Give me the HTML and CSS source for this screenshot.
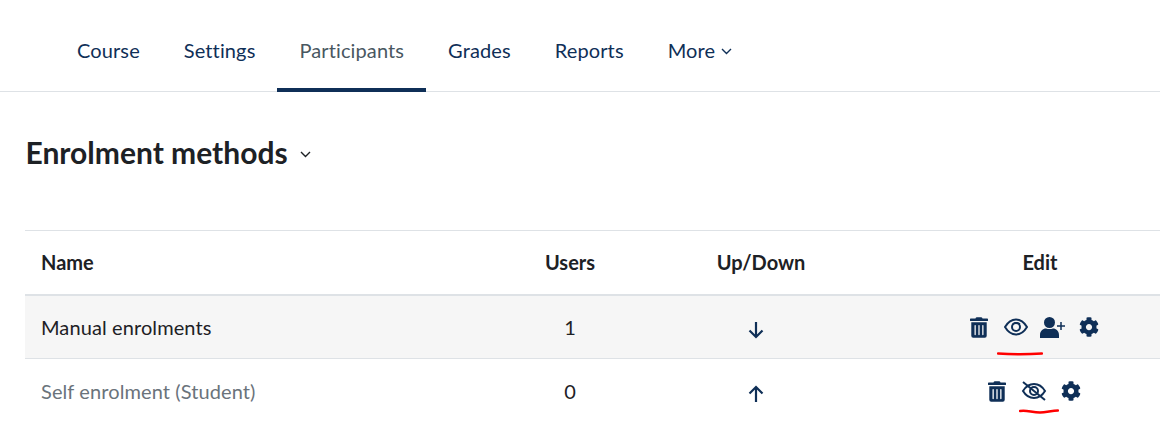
FILE: index.html
```html
<!DOCTYPE html>
<html lang="en">
<head>
  <meta charset="UTF-8">
  <title>Enrolment methods</title>
  <link rel="stylesheet" href="styles.css">
</head>
<body>
  <!-- Course tabs -->
  <nav class="tabs">
    <a class="tab" href="#">Course</a>
    <a class="tab" href="#">Settings</a>
    <a class="tab active" href="#">Participants</a>
    <a class="tab" href="#">Grades</a>
    <a class="tab" href="#">Reports</a>
    <a class="tab" href="#">More
      <svg class="chevron" width="11" height="7" viewBox="0 0 11 7"><path d="M1 1l4.5 4.5L10 1"/></svg>
    </a>
  </nav>

  <div class="heading">
    <h1>Enrolment methods</h1>
    <svg class="chevron" width="11" height="7" viewBox="0 0 11 7"><path d="M1 1l4.5 4.5L10 1"/></svg>
  </div>

  <table class="methods">
    <colgroup>
      <col class="col-name">
      <col class="col-users">
      <col class="col-updown">
      <col class="col-edit">
    </colgroup>
    <thead>
      <tr>
        <th class="name">Name</th>
        <th>Users</th>
        <th>Up/Down</th>
        <th>Edit</th>
      </tr>
    </thead>
    <tbody>
      <tr class="striped">
        <td class="name">Manual enrolments</td>
        <td>1</td>
        <td>
          <svg class="arrow" width="16" height="18" viewBox="0 0 16 18"><path d="M8 1v15M1.500 9.500L8 16l6.500-6.500"/></svg>
        </td>
        <td>
          <div class="actions">
            <svg class="icon" width="18" height="21" viewBox="0 0 448 512"><use href="#trash"/></svg>
            <span class="marked marked-one">
              <svg class="line-icon" width="24" height="18" viewBox="0 0 24 18">
                <path d="M1 9C4 4 8 1.500 12 1.500S20 4 23 9c-3 5-7 7.500-11 7.500S4 14 1 9z"/>
                <circle cx="12" cy="9" r="4"/>
                <path class="glint" d="M8.500 6.500C10 4.500 14 4 16 6"/>
              </svg>
              <svg class="scribble scribble-one" width="46" height="5" viewBox="0 0 46 5"><path d="M1 2.500c14 1 30 1 44 0"/></svg>
            </span>
            <svg class="icon" width="26" height="21" viewBox="0 0 26 21">
              <circle cx="9.500" cy="5.500" r="5.500"/>
              <path d="M0 21v-3c0-4 3-6.500 6-6.500 2 .8 5 .8 7 0 3 0 6 2.500 6 6.500v3z"/>
              <path class="plus" d="M21 5v8M17 9h8"/>
            </svg>
            <svg class="icon" width="20" height="20" viewBox="0 0 512 512"><use href="#cog"/></svg>
          </div>
        </td>
      </tr>
      <tr>
        <td class="name muted">Self enrolment (Student)</td>
        <td>0</td>
        <td>
          <svg class="arrow" width="16" height="18" viewBox="0 0 16 18"><path d="M8 17V2M1.500 8.500L8 2l6.500 6.500"/></svg>
        </td>
        <td>
          <div class="actions">
            <svg class="icon" width="18" height="21" viewBox="0 0 448 512"><use href="#trash"/></svg>
            <span class="marked marked-two">
              <svg class="line-icon" width="26" height="20" viewBox="0 0 26 20">
                <path d="M2 10C5 5 9 3 13 3s8 2 11 7c-3 5-7 7-11 7s-8-2-11-7z"/>
                <circle cx="13" cy="10" r="4"/>
                <path d="M2 1l22 18"/>
              </svg>
              <svg class="scribble scribble-two" width="40" height="6" viewBox="0 0 40 6"><path d="M1 3c6-1.500 12 1.500 20 1.500 6 0 12-2 18-2"/></svg>
            </span>
            <svg class="icon" width="20" height="20" viewBox="0 0 512 512"><use href="#cog"/></svg>
          </div>
        </td>
      </tr>
    </tbody>
  </table>

  <!-- shared icon shapes -->
  <svg class="defs" width="0" height="0">
    <defs>
      <path id="trash" d="M32 464a48 48 0 0 0 48 48h288a48 48 0 0 0 48-48V128H32zm272-256a16 16 0 0 1 32 0v224a16 16 0 0 1-32 0zm-96 0a16 16 0 0 1 32 0v224a16 16 0 0 1-32 0zm-96 0a16 16 0 0 1 32 0v224a16 16 0 0 1-32 0zM432 32H312l-9.400-18.700A24 24 0 0 0 281.100 0H166.800a23.720 23.720 0 0 0-21.400 13.300L136 32H16A16 16 0 0 0 0 48v32a16 16 0 0 0 16 16h416a16 16 0 0 0 16-16V48a16 16 0 0 0-16-16z"/>
      <path id="cog" d="M487.400 315.700l-42.600-24.600c4.300-23.200 4.300-47 0-70.200l42.600-24.600c4.900-2.800 7.100-8.600 5.500-14-11.100-35.600-30-67.800-54.700-94.600-3.800-4.100-10-5.100-14.800-2.300L380.800 110c-17.900-15.400-38.500-27.300-60.800-35.100V25.800c0-5.600-3.900-10.500-9.400-11.700-36.700-8.200-74.300-7.800-109.200 0-5.500 1.200-9.400 6.100-9.400 11.700V75c-22.200 7.900-42.800 19.800-60.800 35.100L88.700 85.500c-4.900-2.800-11-1.900-14.800 2.300-24.700 26.700-43.600 58.900-54.700 94.600-1.700 5.400.6 11.200 5.500 14L67.300 221c-4.300 23.200-4.300 47 0 70.200l-42.600 24.600c-4.900 2.800-7.100 8.600-5.500 14 11.100 35.600 30 67.800 54.700 94.600 3.800 4.100 10 5.100 14.800 2.300l42.600-24.600c17.900 15.400 38.500 27.300 60.800 35.100v49.200c0 5.600 3.900 10.500 9.400 11.700 36.700 8.200 74.300 7.800 109.200 0 5.500-1.200 9.400-6.100 9.400-11.700v-49.200c22.200-7.900 42.800-19.800 60.800-35.100l42.600 24.600c4.900 2.800 11 1.900 14.800-2.300 24.700-26.700 43.600-58.900 54.700-94.600 1.500-5.500-.7-11.300-5.600-14.100zM256 336c-44.100 0-80-35.900-80-80s35.900-80 80-80 80 35.900 80 80-35.900 80-80 80z"/>
    </defs>
  </svg>
</body>
</html>
```
FILE: styles.css
```css
body {
  font-family: Lato, "Open Sans", sans-serif;
  background-color: #fff;
  color: #1d2125;
  margin: 0;
  overflow: hidden;
  height: 439px;
}
.tabs {
  display: flex;
  height: 91px;
  padding-left: 55px;
  border-bottom: 1px solid #dee2e6;
}
.tab {
  display: block;
  padding: 38px 22px 0;
  margin-bottom: -1px;
  border-bottom: 4px solid transparent;
  color: #0f2f57;
  font-size: 20px;
  letter-spacing: 0.12px;
  line-height: 24px;
  text-decoration: none;
  box-sizing: border-box;
  height: 92px;
}
.tab.active {
  color: #495761;
  border-bottom-color: #0f2f57;
}
.chevron {
  fill: none;
  stroke: #0f2f57;
  stroke-width: 1.400;
  vertical-align: 3px;
  margin-left: 1px;
}
.heading {
  display: flex;
  align-items: center;
  gap: 12px;
  padding: 38px 0 0 25.500px;
  height: 43px;
}
.heading .chevron {
  stroke: #1d2125;
  margin: 6px 0 0;
}
h1 {
  margin: 0;
  font-size: 30px;
  line-height: 40px;
  font-weight: 700;
}
.methods {
  border-collapse: collapse;
  table-layout: fixed;
  width: 1193px;
  margin: 57px 0 0 25px;
  font-size: 20px;
  letter-spacing: 0.1px;
}
.col-name { width: 455px; }
.col-users { width: 180px; }
.col-updown { width: 202px; }
.col-edit { width: 356px; }
th, td {
  text-align: center;
  padding: 0;
}
th {
  height: 62px;
  padding-bottom: 1px;
  border-top: 1px solid #dee2e6;
  border-bottom: 2px solid #dee2e6;
  font-weight: 700;
  letter-spacing: 0;
}
td {
  height: 62px;
  border-bottom: 1px solid #dee2e6;
}
tbody tr:last-child td {
  height: 64px;
  border-bottom: none;
}
.striped td {
  background-color: #f6f6f6;
}
th.name, td.name {
  text-align: left;
  padding-left: 16px;
}
.muted {
  color: #6a737b;
}
.arrow {
  fill: none;
  stroke: #0f2f57;
  stroke-width: 2.200;
  vertical-align: middle;
  margin-right: 10px;
}
.actions {
  display: flex;
  justify-content: center;
  align-items: center;
  gap: 13px;
  padding-right: 11px;
}
.icon {
  fill: #0f2f57;
  display: block;
}
.plus {
  fill: none;
  stroke: #0f2f57;
  stroke-width: 1.500;
}
.line-icon {
  fill: none;
  stroke: #0f2f57;
  stroke-width: 2;
  display: block;
}
.glint {
  stroke-width: 1.500;
}
.marked {
  position: relative;
  display: block;
}
.marked-one {
  margin: 0 -1px 0 3px;
}
.marked-two {
  margin: 0 1px 0 2px;
}
.scribble {
  position: absolute;
  fill: none;
  stroke: #f00;
  stroke-width: 2.500;
  stroke-linecap: round;
}
.scribble-one {
  left: -7px;
  top: 33px;
}
.scribble-two {
  left: -2px;
  top: 27px;
}
.defs {
  position: absolute;
}
```
